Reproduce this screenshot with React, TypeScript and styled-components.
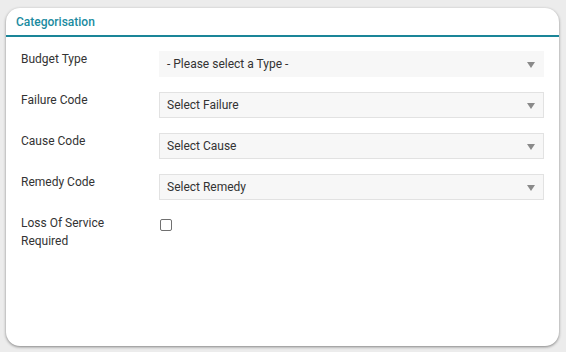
import React from "react";
import styled, { createGlobalStyle } from "styled-components";

const Global = createGlobalStyle`
  html, body { margin: 0; padding: 0; background: #ececec; }
  body { font-family: Roboto, "Noto Sans", Arial, sans-serif; }
`;

const Page = styled.div`
  width: 566px;
  height: 352px;
  box-sizing: border-box;
  padding: 8px 7px 6px 6px;
  display: flex;
`;

const Card = styled.section`
  flex: 1;
  background: #fff;
  border-radius: 14px;
  box-shadow: 0 1px 3px rgba(0, 0, 0, 0.45);
  display: flex;
  flex-direction: column;
  overflow: hidden;
`;

const Header = styled.header`
  height: 26px;
  border-bottom: 2px solid #1a8598;
  display: flex;
  align-items: center;
  padding: 1px 10px 0;
  color: #1b8ba0;
  font-size: 12px;
  font-weight: 500;
`;

const Body = styled.div`
  padding: 14px 15px 0 15px;
  display: flex;
  flex-direction: column;
  gap: 15px;
`;

const Row = styled.div`
  display: grid;
  grid-template-columns: 138px 1fr;
  align-items: start;
`;

const Label = styled.label`
  font-size: 12px;
  color: #333;
  line-height: 18px;
  margin-top: -1px;
`;

const Select = styled.div<{ $bordered?: boolean }>`
  height: 26px;
  box-sizing: border-box;
  background: #f7f7f7;
  border: 1px solid ${(p) => (p.$bordered ? "#e2e2e2" : "#f7f7f7")};
  display: flex;
  align-items: center;
  justify-content: space-between;
  padding: 0 8px 0 7px;
  font-size: 12px;
  color: #333;
`;

const Arrow = styled.span`
  width: 0;
  height: 0;
  border-left: 4px solid transparent;
  border-right: 4px solid transparent;
  border-top: 6px solid #8a8a8a;
  margin-top: 1px;
`;

const Checkbox = styled.span`
  display: block;
  width: 12px;
  height: 12px;
  box-sizing: border-box;
  border: 1px solid #707070;
  border-radius: 2px;
  margin: 4px 0 0 1px;
`;

const rows = [
  { label: "Budget Type", value: "- Please select a Type -", bordered: false },
  { label: "Failure Code", value: "Select Failure", bordered: true },
  { label: "Cause Code", value: "Select Cause", bordered: true },
  { label: "Remedy Code", value: "Select Remedy", bordered: true },
];

export default function App() {
  return (
    <>
      <Global />
      <Page>
        <Card>
          <Header>Categorisation</Header>
          <Body>
            {rows.map((r) => (
              <Row key={r.label}>
                <Label>{r.label}</Label>
                <Select $bordered={r.bordered}>
                  <span>{r.value}</span>
                  <Arrow />
                </Select>
              </Row>
            ))}
            <Row>
              <Label>
                Loss Of Service
                <br />
                Required
              </Label>
              <Checkbox />
            </Row>
          </Body>
        </Card>
      </Page>
    </>
  );
}
